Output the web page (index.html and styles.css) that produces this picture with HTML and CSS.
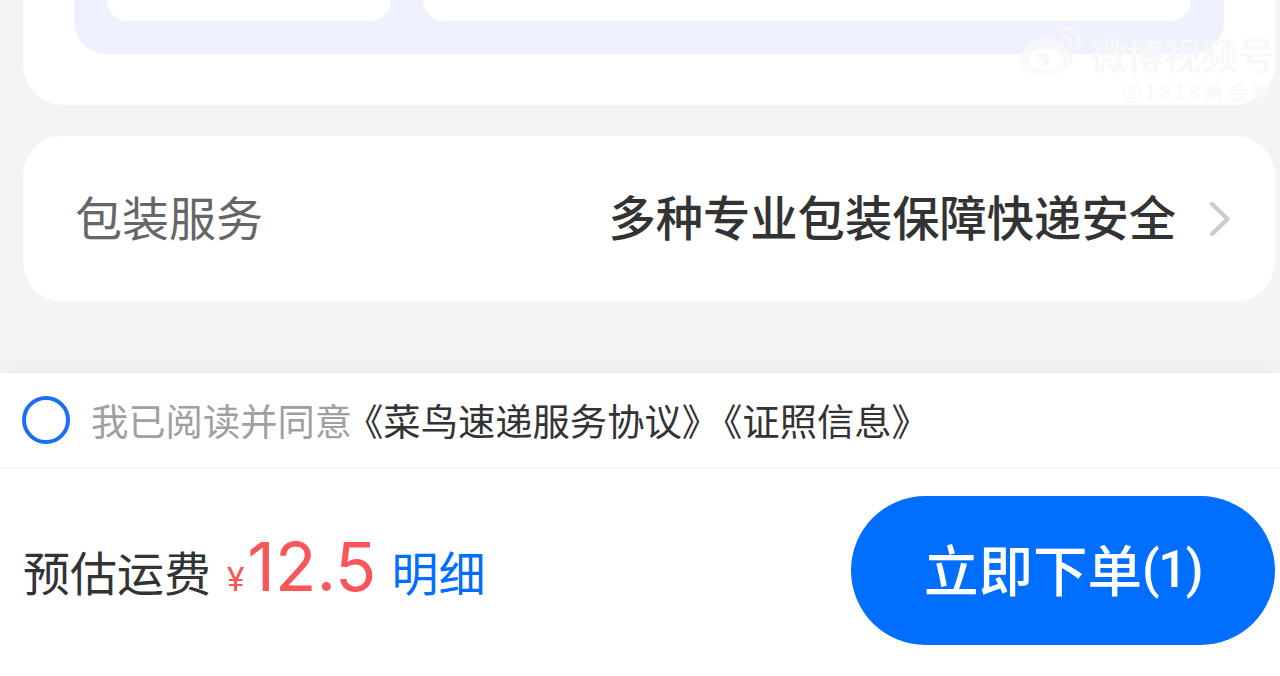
FILE: index.html
```html
<!DOCTYPE html>
<html lang="zh-CN">
<head>
    <meta charset="UTF-8">
    <meta name="viewport" content="width=device-width, initial-scale=1.0">
    <title>寄快递</title>
    <link rel="stylesheet" href="styles.css">
</head>
<body>
    <div class="page">
        <div class="card options-card">
            <div class="options">
                <div class="option"></div>
                <div class="option option-wide"></div>
            </div>
        </div>

        <div class="card service-card">
            <span class="service-label">包装服务</span>
            <span class="service-value">多种专业包装保障快递安全</span>
            <svg class="arrow" viewBox="0 0 22 36" width="22" height="36">
                <path d="M3 3 L18.5 18 L3 33" fill="none" stroke="#ccc" stroke-width="4.4" stroke-linecap="round" stroke-linejoin="round"/>
            </svg>
        </div>

        <div class="footer">
            <div class="agreement">
                <span class="radio"></span>
                <span class="agree-text">我已阅读并同意</span>
                <span class="agree-link">《菜鸟速递服务协议》</span>
                <span class="agree-link second">《证照信息》</span>
            </div>
            <div class="order-bar">
                <span class="fee-label">预估运费</span>
                <span class="currency">¥</span>
                <span class="price">12.5</span>
                <span class="detail">明细</span>
                <button class="submit">立即下单<span class="count">(1)</span></button>
            </div>
        </div>

        <div class="watermark">
            <svg class="weibo" viewBox="0 0 66 54" width="66" height="54">
                <path d="M23 15 C12 16 2 27 3 36 C4 46 17 50 29 49 C43 48 54 41 54 33 C54 28 50 26 47 25 C49 19 44 16 35 20 C36 14 32 12 23 15 Z" fill="#fafafa" fill-opacity="0.7" stroke="#f8f8f8" stroke-width="2"/>
                <ellipse cx="27" cy="34" rx="17" ry="11" fill="#fff" stroke="#f8f8f8"/>
                <circle cx="25" cy="35" r="7" fill="#f9f9f9"/>
                <circle cx="23" cy="37" r="2.5" fill="#fff"/>
                <path d="M42 4 C55 1 64 11 60 23 M43 12 C50 10 54 15 52 21" fill="none" stroke="#f7f7fb" stroke-width="4" stroke-linecap="round"/>
            </svg>
            <div class="mark-text">
                <div class="mark-name">微博视频号</div>
                <div class="mark-user">@1818黄金眼</div>
            </div>
        </div>
    </div>
</body>
</html>
```

FILE: styles.css
```css
* {
    box-sizing: border-box;
}
body {
    margin: 0;
    background-color: #f4f4f4;
    font-family: "Noto Sans CJK SC", sans-serif;
    color: #333;
}
.page {
    position: relative;
    width: 1280px;
    height: 676px;
    overflow: hidden;
    display: flex;
    flex-direction: column;
}
.card {
    margin-left: 23px;
    margin-right: 5px;
    background-color: #fff;
}
.options-card {
    height: 105px;
    padding: 0 51px;
    border-radius: 0 0 40px 40px;
}
.options {
    display: flex;
    gap: 32px;
    height: 54px;
    padding: 0 33px 33px;
    background-color: #f0f1fe;
    border-radius: 0 0 32px 32px;
}
.option {
    width: 284px;
    background-color: #fff;
    border-radius: 0 0 26px 26px;
}
.option-wide {
    flex: 1;
}
.service-card {
    display: flex;
    align-items: center;
    height: 166px;
    margin-top: 31px;
    padding: 0 44px 0 52px;
    border-radius: 40px;
    line-height: 60px;
}
.service-label,
.service-value {
    padding-bottom: 6px;
}
.service-label {
    font-size: 47px;
    color: #666;
}
.service-value {
    margin-left: auto;
    font-size: 47.3px;
    font-weight: 500;
}
.arrow {
    margin-left: 33px;
}
.footer {
    flex: 1;
    margin-top: 71px;
    background-color: #fff;
    box-shadow: 0 -2px 24px rgba(0,0,0,0.06);
}
.agreement {
    display: flex;
    align-items: center;
    height: 96px;
    padding: 0 22px;
    border-bottom: 2px solid #f8f8f8;
    font-size: 37.3px;
    line-height: 50px;
    white-space: nowrap;
}
.radio {
    width: 48px;
    height: 48px;
    margin-right: 21px;
    border: 4px solid #1a6ff5;
    border-radius: 50%;
}
.agree-text,
.agree-link {
    padding-bottom: 1px;
}
.agree-text {
    color: #a0a0a0;
}
.agree-link {
    margin-left: -6px;
    text-spacing-trim: space-all;
}
.second {
    margin-left: -14px;
}
.order-bar {
    display: flex;
    align-items: baseline;
    padding: 27px 5px 0 23px;
    white-space: nowrap;
}
.fee-label {
    font-size: 47px;
}
.currency {
    margin-left: 16px;
    font-family: Roboto, sans-serif;
    font-size: 33px;
    color: #fa5659;
}
.price {
    margin-left: 3px;
    font-family: Inter, sans-serif;
    font-size: 68px;
    color: #fa5659;
}
.detail {
    margin-left: 15px;
    font-size: 47px;
    color: #006eff;
}
.submit {
    width: 424px;
    height: 149px;
    margin-left: auto;
    padding: 0 0 7px;
    border: none;
    border-radius: 75px;
    background-color: #006eff;
    color: #fff;
    font-family: inherit;
    font-size: 54.5px;
    font-weight: 500;
}
.count {
    font-family: Roboto, sans-serif;
    font-size: 51px;
    line-height: 1;
    letter-spacing: -1.5px;
    vertical-align: 4px;
}
.watermark {
    position: absolute;
    top: 25px;
    left: 1018px;
    display: flex;
    gap: 6px;
    color: #f8f8f9;
    white-space: nowrap;
}
.mark-name {
    margin-top: 4px;
    font-size: 37px;
    font-weight: 500;
    line-height: 50px;
}
.mark-user {
    margin-left: 32px;
    font-size: 21px;
    line-height: 24px;
    letter-spacing: 3px;
}
```
